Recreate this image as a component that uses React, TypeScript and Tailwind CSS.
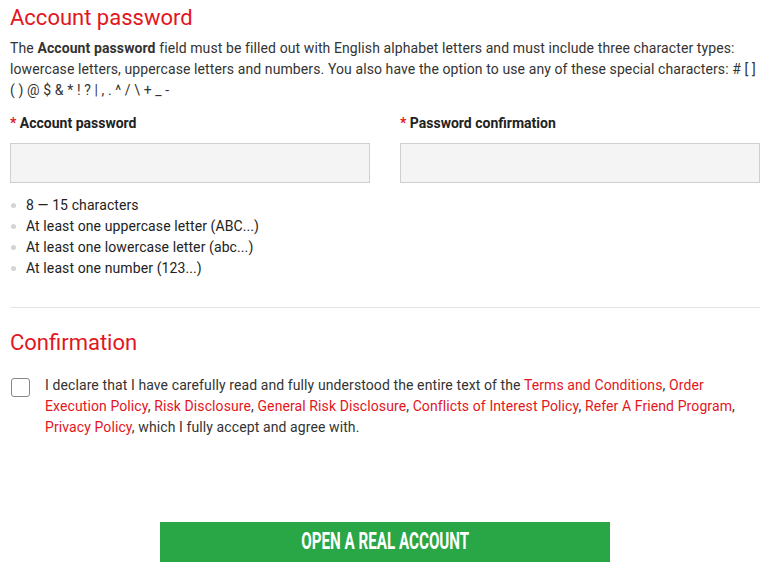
import React from "react";

const Link = ({ children }: { children: React.ReactNode }) => (
  <span className="text-[#e2161d]">{children}</span>
);

export default function App() {
  return (
    <div className="w-[780px] h-[568px] bg-white pl-[10px] pr-[20px] text-[#333] overflow-hidden" style={{ fontFamily: "Roboto, 'Liberation Sans', sans-serif" }}>
      <h1 className="text-[22px] leading-[36px] text-[#e2161d] font-normal">Account password</h1>
      <p className="mt-[2px] text-[14px] leading-[21px] tracking-[0.1px]">
        The <b className="font-bold">Account password</b> field must be filled out with English alphabet letters and must include three character types: lowercase letters, uppercase letters and numbers. You also have the option to use any of these special characters: # [ ] ( ) @ $ &amp; * ! ? | , . ^ / \ + _ -
      </p>
      <div className="mt-[12px] grid grid-cols-2 gap-[30px]">
        <div>
          <div className="text-[14px] leading-[20px] font-bold text-[#222]"><span className="text-[#e2161d]">*</span> Account password</div>
          <div className="mt-[10px] h-[40px] bg-[#f4f4f4] border border-[#cfcfcf]"></div>
        </div>
        <div>
          <div className="text-[14px] leading-[20px] font-bold text-[#222]"><span className="text-[#e2161d]">*</span> Password confirmation</div>
          <div className="mt-[10px] h-[40px] bg-[#f4f4f4] border border-[#cfcfcf]"></div>
        </div>
      </div>
      <ul className="mt-[12px] text-[14px] leading-[21px] tracking-[0.1px] text-[#222]">
        {["8 — 15 characters", "At least one uppercase letter (ABC...)", "At least one lowercase letter (abc...)", "At least one number (123...)"].map((t) => (
          <li key={t} className="flex items-center">
            <span className="w-[5px] h-[5px] rounded-full bg-[#d4d4d4] ml-[1px] mr-[10px]"></span>
            {t}
          </li>
        ))}
      </ul>
      <div className="mt-[28px] h-px bg-[#e5e5e5]"></div>
      <h2 className="mt-[17px] text-[22px] leading-[36px] text-[#e2161d] font-normal">Confirmation</h2>
      <div className="mt-[14px] flex">
        <div className="mt-[3px] ml-[1px] w-[19px] h-[19px] shrink-0 rounded-[3px] border border-[#888]"></div>
        <p className="ml-[15px] text-[14px] leading-[21px] tracking-[0.1px] text-[#333]">
          I declare that I have carefully read and fully understood the entire text of the <Link>Terms and Conditions</Link>, <Link>Order Execution Policy</Link>, <Link>Risk Disclosure</Link>, <Link>General Risk Disclosure</Link>, <Link>Conflicts of Interest Policy</Link>, <Link>Refer A Friend Program</Link>, <Link>Privacy Policy</Link>, which I fully accept and agree with.
        </p>
      </div>
      <div className="mt-[84px] flex justify-center">
        <button className="w-[450px] h-[40px] bg-[#29a645] text-white flex items-center justify-center">
          <span className="inline-block scale-x-[0.66] text-[23px] font-bold uppercase" style={{ fontFamily: "Roboto, sans-serif" }}>Open a real account</span>
        </button>
      </div>
    </div>
  );
}
